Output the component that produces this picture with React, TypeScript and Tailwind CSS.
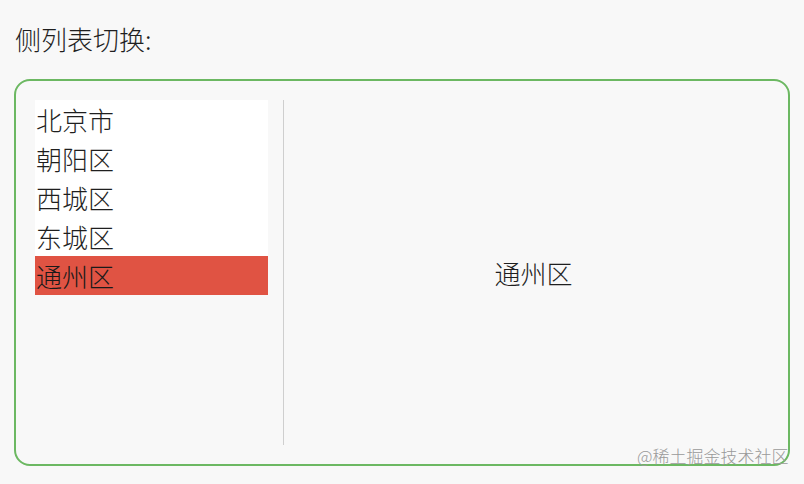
import { useState } from "react";

const districts = ["北京市", "朝阳区", "西城区", "东城区", "通州区"];

export default function App() {
  const [active, setActive] = useState(4);

  return (
    <div className="relative h-[484px] w-[804px] overflow-hidden bg-[#f8f8f8] font-['Noto_Sans_CJK_SC','Noto_Sans',sans-serif] font-light text-[#1f1f1f]">
      <div className="px-[14px] pt-[21px]">
        <h1 className="h-[36px] pl-px text-[26px] leading-[36px]">侧列表切换:</h1>

        <div className="mt-[22px] flex h-[387px] w-[776px] rounded-[16px] border-2 border-[#6cb862] p-[19px]">
          <ul className="flex w-[233px] flex-col self-start bg-white">
            {districts.map((d, i) => (
              <li
                key={d}
                onClick={() => setActive(i)}
                className={
                  i === active
                    ? "h-[39px] cursor-pointer bg-[#e05343] pl-px text-[26px] leading-[39px] text-[#1a1a1a]"
                    : "h-[39px] cursor-pointer pl-px text-[26px] leading-[39px]"
                }
              >
                {d}
              </li>
            ))}
          </ul>

          <div className="ml-[15px] w-px bg-[#cfcfcf]" />

          <div className="flex flex-1 items-center justify-center pl-[14px] text-[26px]">
            {districts[active]}
          </div>
        </div>
      </div>

      <span className="absolute left-[637px] top-[445px] text-[17px] leading-[22px] text-[#9a9a9a]">
        @稀土掘金技术社区
      </span>
    </div>
  );
}
